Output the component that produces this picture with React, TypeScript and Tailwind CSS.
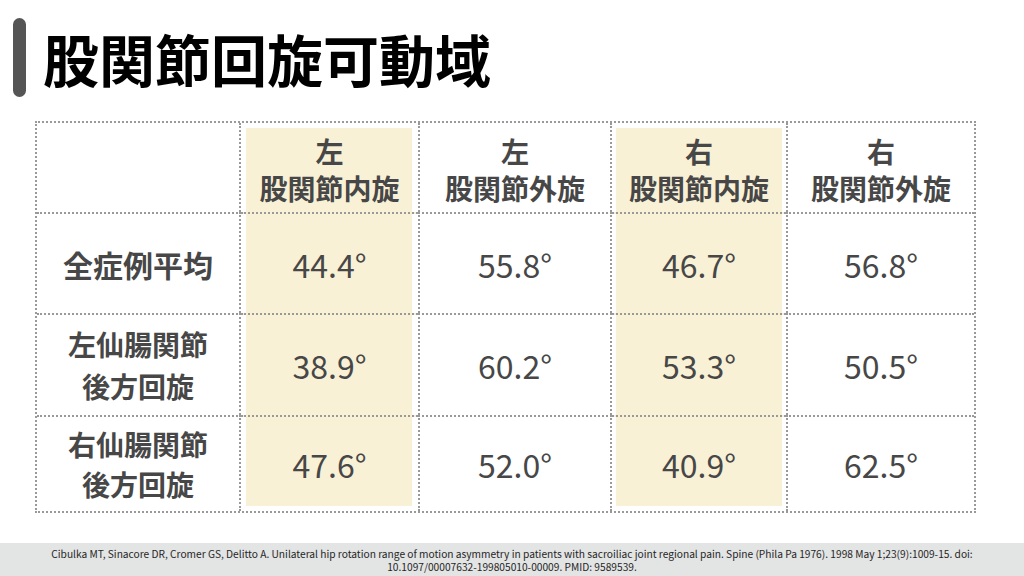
const headers = [
  { side: "左", label: "股関節内旋" },
  { side: "左", label: "股関節外旋" },
  { side: "右", label: "股関節内旋" },
  { side: "右", label: "股関節外旋" },
];

const rows = [
  { label: ["全症例平均"], values: ["44.4°", "55.8°", "46.7°", "56.8°"], leading: "leading-[42px] text-[30px]" },
  { label: ["左仙腸関節", "後方回旋"], values: ["38.9°", "60.2°", "53.3°", "50.5°"], leading: "leading-[42px] text-[28px]" },
  { label: ["右仙腸関節", "後方回旋"], values: ["47.6°", "52.0°", "40.9°", "62.5°"], leading: "leading-[40px] text-[28px]" },
];

// vertical dotted lines live on the plain columns so the beige columns stay clean
const colBorder = ["", "", "border-x-2", "", "border-l-2"];

// beige wash is inset from the lines; white inset shadows cut the margins
const wash = {
  top: [
    "shadow-[inset_5px_5px_0_0_#fff,inset_-6px_0_0_0_#fff]",
    "shadow-[inset_4px_5px_0_0_#fff,inset_-4px_0_0_0_#fff]",
  ],
  mid: [
    "shadow-[inset_5px_0_0_0_#fff,inset_-6px_0_0_0_#fff]",
    "shadow-[inset_4px_0_0_0_#fff,inset_-4px_0_0_0_#fff]",
  ],
  bottom: [
    "shadow-[inset_5px_-5px_0_0_#fff,inset_-6px_0_0_0_#fff]",
    "shadow-[inset_4px_-5px_0_0_#fff,inset_-4px_0_0_0_#fff]",
  ],
};

function washFor(col: number, row: number) {
  if (col !== 1 && col !== 3) return "";
  const i = col === 1 ? 0 : 1;
  const set = row === 0 ? wash.top : row === rows.length ? wash.bottom : wash.mid;
  return `bg-[#f9f1d6] ${set[i]}`;
}

export default function App() {
  return (
    <div className="flex h-[576px] w-[1024px] flex-col overflow-hidden bg-white font-['Noto_Sans_CJK_JP','Noto_Sans',sans-serif]">
      <header className="flex items-center gap-[17px] pl-[13px] pt-[18px]">
        <span className="h-[79px] w-[13px] rounded-full bg-[#555555]" />
        <h1 className="text-[56px] font-bold leading-none text-black">股関節回旋可動域</h1>
      </header>

      <div className="ml-[35px] mt-[24px] grid w-[941px] grid-cols-[204px_177px_194px_174px_188px] grid-rows-[89px_101px_102px_96px] border-2 border-dotted border-[#999999] text-[#474747]">
        <div className="border-r-2 border-dotted border-[#999999]" />
        {headers.map((h, i) => (
          <div
            key={i}
            className={`flex flex-col items-center justify-center border-dotted border-[#999999] pt-[4px] text-[28px] font-bold leading-[37px] ${colBorder[i + 1]} ${washFor(i + 1, 0)}`}
          >
            <span>{h.side}</span>
            <span>{h.label}</span>
          </div>
        ))}

        {rows.map((r, ri) => (
          <>
            <div
              key={`l${ri}`}
              className={`flex flex-col items-center justify-center border-r-2 border-t-2 border-dotted border-[#999999] font-bold ${r.leading}`}
            >
              {r.label.map((l) => (
                <span key={l}>{l}</span>
              ))}
            </div>
            {r.values.map((v, ci) => (
              <div
                key={`v${ri}-${ci}`}
                className={`flex items-center justify-center border-t-2 border-dotted border-[#999999] text-[32px] ${colBorder[ci + 1]} ${washFor(ci + 1, ri + 1)}`}
              >
                {v}
              </div>
            ))}
          </>
        ))}
      </div>

      <footer className="mt-auto flex h-[33px] items-center justify-center bg-[#e3e4e4] text-center text-[10.2px] leading-[13px] text-[#262626]">
        <p>
          Cibulka MT, Sinacore DR, Cromer GS, Delitto A. Unilateral hip rotation range of motion asymmetry in patients with sacroiliac joint regional pain. Spine (Phila Pa 1976). 1998 May 1;23(9):1009-15. doi:
          <br />
          10.1097/00007632-199805010-00009. PMID: 9589539.
        </p>
      </footer>
    </div>
  );
}
